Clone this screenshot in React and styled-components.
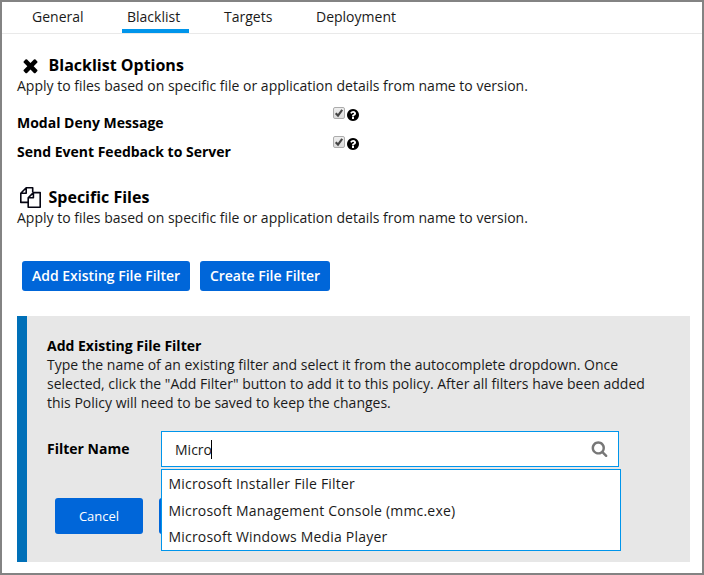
import React from "react";
import styled, { createGlobalStyle } from "styled-components";

const GlobalStyle = createGlobalStyle`
  * { box-sizing: border-box; }
  body { margin: 0; background: #fff; }
  h2, h3, p, ul { margin: 0; padding: 0; }
`;

const Frame = styled.div`
  width: 704px;
  height: 575px;
  border: 2px solid #838383;
  background: #fff;
  color: #000;
  font: 14px/19px "Open Sans", "Noto Sans", sans-serif;
  overflow: hidden;
  white-space: nowrap;
`;
const Tabs = styled.nav`
  display: flex;
  height: 32px;
  padding-left: 25px;
  gap: 30px;
  border-bottom: 1px solid #e9e9e9;
`;
const Tab = styled.a`
  width: ${(p) => p.$width}px;
  height: 31px;
  padding: 5px 0 0 5px;
  color: #1a1a1a;
  border-bottom: 4px solid ${(p) => (p.$active ? "#0095eb" : "transparent")};
`;
const Content = styled.main`
  padding: 21px 12px 0 15px;
`;
const Heading = styled.h2`
  display: flex;
  align-items: flex-start;
  height: 21px;
  padding-left: 3px;
  gap: 7.5px;
  font-size: 16px;
  line-height: 21px;
  font-weight: 700;
`;
const Svg = styled.svg`
  display: block;
  flex: none;
  width: ${(p) => p.$size}px;
  height: ${(p) => p.$size}px;
  fill: currentColor;
`;
const Description = styled.p`
  color: #1a1a1a;
  height: 19px;
`;
const Options = styled.div`
  padding-top: 8px;
  height: 92px;
`;
const OptionRow = styled.div`
  display: flex;
  height: 29px;
`;
const OptionLabel = styled.label`
  width: 316px;
  padding-top: 10px;
  font-weight: 700;
`;
const CheckBox = styled.span`
  display: flex;
  width: 12px;
  height: 12px;
  margin-top: 4px;
  border: 1px solid #acacac;
  border-radius: 2px;
  background: linear-gradient(#eee, #dcdcdc);
  color: #444;
`;
const Help = styled.span`
  padding: 5px 0 0 0.5px;
`;
const Actions = styled.div`
  display: flex;
  gap: 10px;
  padding: 34px 0 0 5px;
`;
const Button = styled.button`
  width: ${(p) => p.$width}px;
  height: ${(p) => p.$height || 30}px;
  padding: 0 0 ${(p) => p.$lift || 0}px;
  border: 0;
  border-radius: 3px;
  background: #0066d9;
  color: #fff;
  font-family: inherit;
  font-size: ${(p) => p.$size || 14}px;
  font-weight: ${(p) => p.$weight || 600};
  line-height: 19px;
`;
const Panel = styled.section`
  height: 246px;
  margin-top: 25px;
  padding: 20px 0 0 20px;
  border-left: 10px solid #0070b8;
  background: #e7e7e7;
`;
const PanelTitle = styled.h3`
  font-size: 14px;
  line-height: 19px;
  font-weight: 700;
`;
const Field = styled.div`
  display: flex;
  margin-top: 19px;
`;
const FieldLabel = styled.label`
  width: 114px;
  padding-top: 8px;
  font-weight: 700;
`;
const Combo = styled.div`
  position: relative;
  width: 458px;
`;
const Input = styled.div`
  display: flex;
  align-items: center;
  height: 36px;
  padding: 0 10px 0 13px;
  border: 1px solid #0095eb;
  background: #fff;
  color: #1a1a1a;
`;
const Caret = styled.span`
  width: 1px;
  height: 19px;
  margin-left: -1px;
  background: #000;
`;
const SearchIcon = styled.span`
  margin: -2px 0 0 auto;
  color: #777;
`;
const Menu = styled.ul`
  position: absolute;
  top: 38px;
  left: 0;
  width: 460px;
  height: 82px;
  padding: 1px 0 0 6.5px;
  border: 1px solid #0095eb;
  background: #fff;
  list-style: none;
`;
const MenuItem = styled.li`
  height: 26.5px;
  line-height: 26px;
  color: #1a1a1a;
  letter-spacing: 0.2px;
`;
const PanelActions = styled.div`
  display: flex;
  gap: 16px;
  padding: 31px 0 0 8px;
`;

const paths = {
  times:
    "M1490 1322q0 40-28 68l-136 136q-28 28-68 28t-68-28l-294-294-294 294q-28 28-68 28t-68-28l-136-136q-28-28-28-68t28-68l294-294-294-294q-28-28-28-68t28-68l136-136q28-28 68-28t68 28l294 294 294-294q28-28 68-28t68 28l136 136q28 28 28 68t-28 68l-294 294 294 294q28 28 28 68z",
  question:
    "M1024 1376v-192q0-14-9-23t-23-9h-192q-14 0-23 9t-9 23v192q0 14 9 23t23 9h192q14 0 23-9t9-23zm256-672q0-88-55.5-163t-138.5-116-170-41q-243 0-371 213-15 24 8 42l132 100q7 6 19 6 16 0 25-12 53-68 86-92 34-24 86-24 48 0 85.5 26t37.5 59q0 38-20 61t-68 45q-63 28-115.5 86.5t-52.5 125.5v36q0 14 9 23t23 9h192q14 0 23-9t9-23q0-19 21.5-49.5t54.5-49.5q32-18 49-28.5t46-35 44.5-48 28-60.5 12.5-81zm384 192q0 209-103 385.5t-279.5 279.5-385.5 103-385.5-103-279.5-279.5-103-385.5 103-385.5 279.5-279.5 385.5-103 385.5 103 279.5 279.5 103 385.5z",
  search:
    "M1216 832q0-185-131.5-316.5t-316.5-131.5-316.5 131.5-131.5 316.5 131.5 316.5 316.5 131.5 316.5-131.5 131.5-316.5zm512 832q0 52-38 90t-90 38q-54 0-90-38l-343-342q-179 124-399 124-143 0-273.5-55.5t-225-150-150-225-55.5-273.5 55.5-273.5 150-225 225-150 273.5-55.5 273.5 55.5 225 150 150 225 55.5 273.5q0 220-124 399l343 343q37 37 37 90z",
};

const Icon = ({ name, size }) => (
  <Svg $size={size} viewBox="0 0 1792 1792" aria-hidden="true">
    <path d={paths[name]} />
  </Svg>
);

const FilesIcon = () => (
  <Svg $size={21} viewBox="0 0 21 21" aria-hidden="true">
    <g fill="none" stroke="#050512" strokeWidth="1.6" strokeLinejoin="round">
      <path d="M8 15.4H.8V6.2L6.2.8h6.5v4.5M6.2.8v5.4H.8" />
      <path d="M13.4 5.6h6.8v14.6H8.2V10.8zM13.4 5.6v5.2H8.2" />
    </g>
  </Svg>
);

const Option = ({ label }) => (
  <OptionRow>
    <OptionLabel>{label}</OptionLabel>
    <CheckBox role="checkbox" aria-checked="true" aria-label={label}>
      <svg width="10" height="10" viewBox="0 0 10 10">
        <path d="M1.7 5.2 4 7.6 8.2 1.8" fill="none" stroke="currentColor" strokeWidth="2.1" />
      </svg>
    </CheckBox>
    <Help>
      <Icon name="question" size={14} />
    </Help>
  </OptionRow>
);

const summary =
  "Apply to files based on specific file or application details from name to version.";

export default function App() {
  return (
    <Frame>
      <GlobalStyle />
      <Tabs>
        <Tab $width={65}>General</Tab>
        <Tab $width={67} $active>Blacklist</Tab>
        <Tab $width={62}>Targets</Tab>
        <Tab $width={90}>Deployment</Tab>
      </Tabs>
      <Content>
        <Heading>
          <Icon name="times" size={21} />
          Blacklist Options
        </Heading>
        <Description>{summary}</Description>
        <Options>
          <Option label="Modal Deny Message" />
          <Option label="Send Event Feedback to Server" />
        </Options>
        <Heading>
          <FilesIcon />
          Specific Files
        </Heading>
        <Description>{summary}</Description>
        <Actions>
          <Button $width={168} $lift={2}>Add Existing File Filter</Button>
          <Button $width={130} $lift={2}>Create File Filter</Button>
        </Actions>
        <Panel>
          <PanelTitle>Add Existing File Filter</PanelTitle>
          <Description>
            Type the name of an existing filter and select it from the autocomplete dropdown. Once
          </Description>
          <Description>
            selected, click the "Add Filter" button to add it to this policy. After all filters have been added
          </Description>
          <Description>this Policy will need to be saved to keep the changes.</Description>
          <Field>
            <FieldLabel>Filter Name</FieldLabel>
            <Combo>
              <Input>
                Micro
                <Caret />
                <SearchIcon>
                  <Icon name="search" size={17} />
                </SearchIcon>
              </Input>
              <Menu>
                <MenuItem>Microsoft Installer File Filter</MenuItem>
                <MenuItem>Microsoft Management Console (mmc.exe)</MenuItem>
                <MenuItem>Microsoft Windows Media Player</MenuItem>
              </Menu>
            </Combo>
          </Field>
          <PanelActions>
            <Button $width={88} $height={36} $size={13} $weight={400}>Cancel</Button>
            <Button $width={88} $height={36} $size={13} $weight={400} aria-label="Add Filter" />
          </PanelActions>
        </Panel>
      </Content>
    </Frame>
  );
}
